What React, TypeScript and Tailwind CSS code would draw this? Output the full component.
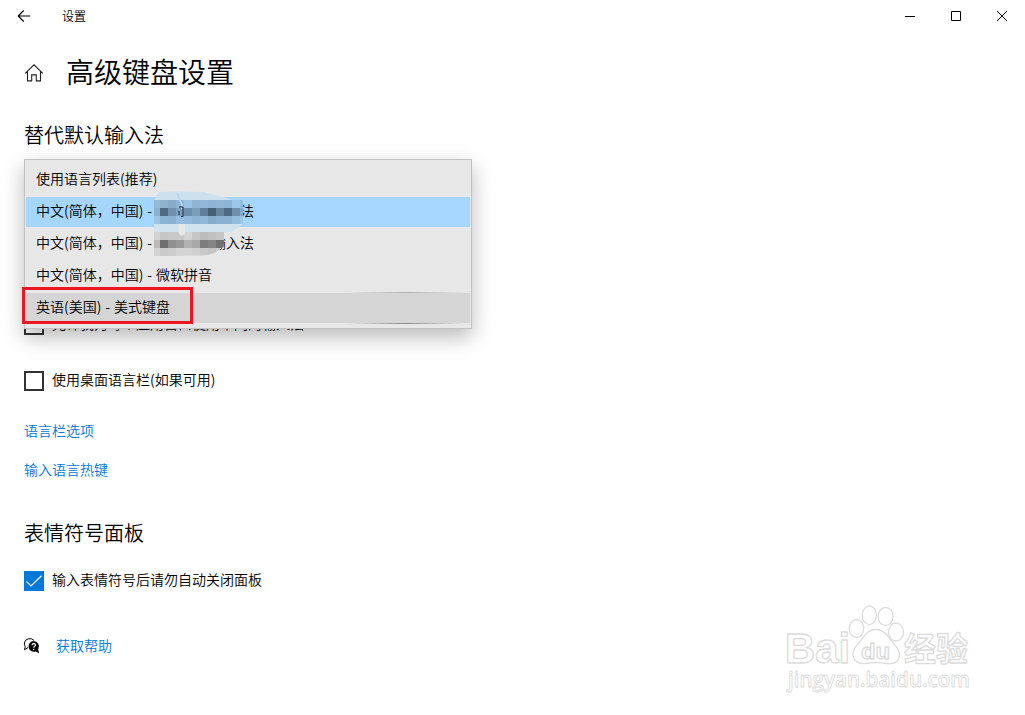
import clsx from "clsx";

const options = [
  { label: "使用语言列表(推荐)" },
  { label: "中文(简体，中国) - ", rest: "法", restClass: "ml-[86px]" },
  { label: "中文(简体，中国) - ", rest: "输入法", restClass: "ml-[58px]" },
  { label: "中文(简体，中国) - 微软拼音" },
  { label: "英语(美国) - 美式键盘" },
];

// 8px cells, one string per line of the mosaic
const blueCells = [
  ["#96b9d6", "#8fb2cf", "#88abc9", "#8fb5d5", "#9ac2e2", "#90b5d3", "#93b8d7", "#8fb4d3", "#92b7d5", "#8db4d5", "#9bc7ea", "#93bde0"],
  ["#8fb1cc", "#4f6a80", "#6f91ad", "#7d9fbb", "#6d8fab", "#7c9db8", "#5f7f9a", "#465f74", "#64849f", "#4d6a82", "#6e90ad", "#82a9ca"],
  ["#9cc3e2", "#8db3d2", "#8bb0cf", "#95bddf", "#93bbdc", "#8cb4d5", "#90b8d9", "#86accc", "#8ab1d1", "#8ab1d2", "#93bcdd", "#9ac5e9"],
];

const grayCells = [
  ["#d2d2d2", "#c6c6c6", "#c9c9c9", "#c9c9c9", "#d3d3d3", "#c6c6c6", "#bcbcbc", "#c1c1c1", "#c6c6c6"],
  ["#bababa", "#6f6f6f", "#909090", "#999999", "#b1b1b1", "#a8a8a8", "#7d7d7d", "#848484", "#707070"],
  ["#d3d3d3", "#cacaca", "#cdcdcd", "#d4d4d4", "#d3d3d3", "#cfcfcf", "#c9c9c9", "#c5c5c5", "#cccccc"],
];

const cellX = (i: number) => (i === 0 ? 0 : i * 8 - 2);

const Mosaic = () => (
  <svg className="absolute left-[129px] top-[31px]" width="102" height="66" viewBox="0 0 102 66">
    <path d="M0 9 5 1Q20 0 50 1Q62 4 78 9H0z" fill="#cce0ee" />
    <path d="M0 33H89L78 41H0z" fill="#d0e2ee" />
    <g>
      {blueCells.map((row, y) =>
        row.map((c, i) => (
          <rect key={`${y}-${i}`} x={cellX(i)} y={9 + y * 8} width={i === 0 ? 6 : i === 11 ? 3 : 8} height="8" fill={c} />
        ))
      )}
    </g>
    <clipPath id="smear">
      <path d="M0 41H78L71 51Q69 60 54 64Q44 65 0 65z" />
    </clipPath>
    <g clipPath="url(#smear)">
      {grayCells.map((row, y) =>
        row.map((c, i) => (
          <rect key={`${y}-${i}`} x={cellX(i)} y={41 + y * 8} width={i === 0 ? 6 : 8} height="8" fill={c} />
        ))
      )}
    </g>
    <path d="M23 2 28 14V18" stroke="#b4daf6" strokeWidth="1.5" fill="none" />
    <path d="M24.500 33H31V43Q27 46 25 43z" fill="#e8e8e8" />
    <path d="M25 16h4v9.500h-2M25 20v4" stroke="#1a2530" strokeWidth="1" fill="none" />
  </svg>
);

const Checkbox = ({ label, checked }: { label: string; checked?: boolean }) => (
  <div className="flex h-5 items-center gap-2">
    <div className={clsx("h-5 w-5 shrink-0", checked ? "bg-[#0078d7]" : "border-2 border-[#333333]")}>
      {checked && (
        <svg width="20" height="20" viewBox="0 0 20 20" fill="none" stroke="#fff" strokeWidth="1.2">
          <path d="M2.500 10.500 7 15 17.500 4.700" />
        </svg>
      )}
    </div>
    <span className="mb-1 whitespace-nowrap text-sm leading-5">{label}</span>
  </div>
);

const TitleBar = () => (
  <div className="flex h-8 items-center justify-between">
    <div className="flex items-center">
      <svg className="ml-[17px]" width="14" height="14" viewBox="0 0 14 14" fill="none" stroke="#000" strokeWidth="1.1">
        <path d="M13.200 7H1.200M6.700 1.500 1.200 7l5.500 5.500" />
      </svg>
      <span className="ml-[31px] text-xs leading-4">设置</span>
    </div>
    <div className="flex">
      {["M0 5.500h10", "M.5.5h9v9H.5z", "M0 0l10 10M10 0L0 10"].map((d) => (
        <div key={d} className="flex w-[46px] justify-center">
          <svg width="10" height="10" viewBox="0 0 10 10" fill="none" stroke="#000">
            <path d={d} />
          </svg>
        </div>
      ))}
    </div>
  </div>
);

const Menu = () => (
  <div className="absolute left-0 top-0 w-[448px] border border-[#c3c3c3] bg-[#e7e7e7] px-px py-[5px] shadow-[0_8px_20px_rgba(0,0,0,0.28)]">
    <div className="flex flex-col gap-0.5">
      {options.map((o, i) => (
        <div
          key={i}
          className={clsx(
            "flex h-[30px] items-center whitespace-pre pb-1 pl-2.5 text-sm leading-5 [word-spacing:0.8px]",
            i === 1 && "bg-[#a5d6ff]",
            i === 4 && "bg-[#d5d5d5]"
          )}
        >
          <span className={clsx(o.rest && "w-[118px]")}>{o.label}</span>
          {o.rest && <span className={o.restClass}>{o.rest}</span>}
        </div>
      ))}
    </div>
    <Mosaic />
    {/* reveal light on the hovered row */}
    <div className="absolute bottom-[35px] right-2 h-px w-[115px] bg-linear-to-r from-transparent via-[#b0b0b0] to-transparent" />
    <div className="absolute bottom-1 right-2 h-px w-[115px] bg-linear-to-r from-transparent via-[#8d8d8d] to-transparent" />
    <div className="absolute -left-[3px] bottom-1 h-[37px] w-[171px] border-3 border-[#ed1620]" />
  </div>
);

const Watermark = () => (
  <svg
    className="absolute left-[780px] top-[600px]"
    width="200"
    height="100"
    viewBox="780 600 200 100"
    fill="#fff"
    stroke="#dcdcdc"
    strokeWidth="1.3"
    strokeLinejoin="round"
  >
    <text x="785" y="663" textLength="65" lengthAdjust="spacingAndGlyphs" className="font-['Liberation_Sans'] text-[43px] font-bold">
      Bai
    </text>
    <ellipse cx="856.500" cy="628.500" rx="7.300" ry="9" />
    <ellipse cx="869.300" cy="615.300" rx="7" ry="9.300" />
    <ellipse cx="885.600" cy="616.500" rx="7.500" ry="9" />
    <ellipse cx="896" cy="632" rx="7.500" ry="9" />
    <path d="M875.500 629.500C882 629.500 887 634 890 639C894 644 900 649 899.500 656C899 662 893 664.500 887 663.500C879 662.300 873 662.300 865 663.500C858 664.500 853 660 853 654C853 648 858 644 862 639C865 634 869 629.500 875.500 629.500z" />
    <text x="861" y="659" textLength="29" lengthAdjust="spacingAndGlyphs" className="font-['Liberation_Sans'] text-[22px] font-bold">
      du
    </text>
    <text x="904" y="661" textLength="64" lengthAdjust="spacingAndGlyphs" className="font-['Noto_Sans_CJK_SC'] text-[33px] font-bold">
      经验
    </text>
    <text x="788" y="687" textLength="182" lengthAdjust="spacingAndGlyphs" strokeWidth="0.9" className="font-['Open_Sans'] text-[21px] font-semibold">
      jingyan.baidu.com
    </text>
  </svg>
);

const App = () => {
  return (
    <div className="relative h-[715px] w-[1025px] overflow-hidden bg-white font-['Noto_Sans_CJK_SC',sans-serif] font-[350] text-black">
      <TitleBar />
      <div className="flex flex-col px-6">
        <div className="mt-5 flex h-10 items-center">
          <svg className="mt-0.5" width="20" height="20" viewBox="0 0 20 20" fill="none" stroke="#222" strokeWidth="1.1">
            <path d="M1.200 10.300 10 1.800l8.800 8.500M3.500 8.500v9.400h4.200v-6h4.600v6h4.200V8.500" />
          </svg>
          <h1 className="mb-0.5 ml-[22px] text-[28px] font-[350] leading-10">高级键盘设置</h1>
        </div>
        <h2 className="mt-[29px] text-xl font-[350] leading-7">替代默认输入法</h2>
        <div className="relative mt-2.5 flex h-44 flex-col justify-end">
          <Checkbox label="允许我为每个应用窗口使用不同的输入法" />
          <Menu />
        </div>
        <div className="mt-9 flex flex-col items-start">
          <Checkbox label="使用桌面语言栏(如果可用)" />
          <a className="mt-[29px] text-sm leading-5 text-[#0078d7]">语言栏选项</a>
          <a className="mt-[19px] text-sm leading-5 text-[#0078d7]">输入语言热键</a>
        </div>
        <h2 className="mt-10 text-xl font-[350] leading-7">表情符号面板</h2>
        <div className="mt-6">
          <Checkbox label="输入表情符号后请勿自动关闭面板" checked />
        </div>
        <div className="mt-[45px] flex h-5 items-center">
          <svg className="-ml-px" width="18" height="18" viewBox="0 0 18 18">
            <path
              d="M5 10.500 1.500 12.800 2.200 9.500A5 5 0 0 1 5.500 1.800Q9 1 11.200 3.500"
              fill="none"
              stroke="#000"
            />
            <path d="M10.600 4a5.400 5.400 0 0 1 4.600 8.200l.9 4-3.400-1.700A5.400 5.400 0 1 1 10.600 4z" fill="#000" />
            <path d="M9 8.300q0-1.600 1.700-1.600t1.700 1.400q0 .9-.9 1.400-.8.400-.8 1.300M10.700 11.800v1.200" fill="none" stroke="#fff" strokeWidth="1.200" />
          </svg>
          <a className="mb-0.5 ml-[15px] text-sm leading-5 text-[#0078d7]">获取帮助</a>
        </div>
      </div>
      <Watermark />
    </div>
  );
};

export default App;
